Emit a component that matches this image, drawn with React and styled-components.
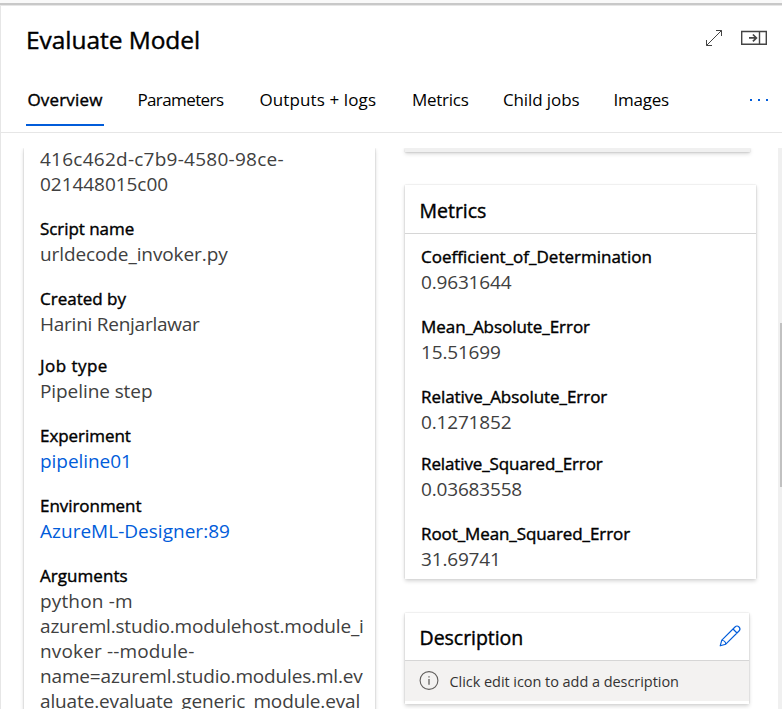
import React from "react";
import styled, { createGlobalStyle } from "styled-components";

const GlobalStyle = createGlobalStyle`
  * { box-sizing: border-box; }
  body {
    margin: 0;
    background: #fff;
    color: #000;
    font-family: "Open Sans", "Noto Sans", sans-serif;
    overflow: hidden;
  }
`;

const Page = styled.div`
  display: flex;
  flex-direction: column;
  width: 782px;
  height: 709px;
  overflow: hidden;
  background: #f9f9f9;
  padding-top: 3px;
`;

const Panel = styled.main`
  display: flex;
  flex-direction: column;
  flex: 1;
  min-height: 0;
  background: #fff;
  border-top: 2px solid #c8c8c8;
  box-shadow: inset 1px 1px 0 #e6e6e6;
`;

const Header = styled.header`
  display: flex;
  justify-content: space-between;
  height: 70px;
  padding: 18px 15px 0 26px;
`;

const Title = styled.h1`
  margin: 0;
  font-size: 24.5px;
  line-height: 34px;
  font-weight: 400;
  letter-spacing: -0.05px;
  -webkit-text-stroke: 0.4px #000;
`;

const HeaderActions = styled.div`
  display: flex;
  gap: 18px;
  height: 30px;
  align-items: center;
`;

const IconButton = styled.button`
  display: flex;
  padding: 0;
  border: 0;
  background: none;
  color: ${(p) => p.$color || "#444"};
`;

const EditButton = styled(IconButton)`
  margin-bottom: 4px;
`;

const TabBar = styled.nav`
  display: flex;
  height: 58px;
  margin-left: 1px;
  padding-left: 25px;
  border-bottom: 1px solid #e6e6e6;
`;

const Tab = styled.a`
  width: ${(p) => p.$width}px;
  height: 51px;
  margin-right: ${(p) => p.$gap}px;
  padding: 12px 0 0 1.4px;
  font-size: 17px;
  line-height: 26px;
  white-space: nowrap;
  letter-spacing: ${(p) => p.$track || 0}px;
  border-bottom: 2px solid ${(p) => (p.$active ? "#015cda" : "transparent")};
  -webkit-text-stroke: ${(p) => (p.$active ? "0.4px #000" : "0")};
`;

const MoreButton = styled(IconButton)`
  height: 49px;
  margin-left: auto;
  margin-right: 13px;
  align-items: center;
`;

const Body = styled.section`
  display: flex;
  flex: 1;
  min-height: 0;
  margin-top: 15px;
  padding-left: 24px;
  overflow: hidden;
`;

const cardShadow = "0 1.6px 4px rgba(0,0,0,.18), 0 0.3px 1.5px rgba(0,0,0,.24)";

const Details = styled.div`
  width: 351px;
  height: 640px;
  flex: none;
  padding: 0 10px 0 16px;
  box-shadow: ${cardShadow};
`;

const DetailsContent = styled.div`
  margin-top: -2px;
`;

const Side = styled.div`
  width: 352px;
  margin-left: 30px;
`;

const CardTail = styled.div`
  width: 345px;
  height: 4px;
  margin-bottom: 33px;
  background: #f0f0f0;
  box-shadow: ${cardShadow};
`;

const Card = styled.article`
  width: ${(p) => p.$width}px;
  height: ${(p) => p.$height}px;
  margin-bottom: 34px;
  background: #fff;
  box-shadow: ${cardShadow};
`;

const CardHeader = styled.div`
  display: flex;
  justify-content: space-between;
  align-items: center;
  height: ${(p) => p.$height}px;
  padding: 3px 8px 0 14.6px;
  border-bottom: 1px solid #d6d6d6;
`;

const CardTitle = styled.h2`
  margin: 0;
  font-size: 19.5px;
  line-height: 28px;
  font-weight: 400;
  letter-spacing: -0.05px;
  -webkit-text-stroke: 0.4px #000;
`;

const CardBody = styled.div`
  padding: 11px 15px 0 16px;
`;

const Field = styled.div`
  margin-bottom: ${(p) => p.$gap ?? 21}px;
`;

const Label = styled.div`
  font-size: 17px;
  line-height: 24px;
  white-space: nowrap;
  letter-spacing: ${(p) => (p.$track || 0) - 0.05}px;
  -webkit-text-stroke: 0.4px #000;
`;

const Value = styled.div`
  padding-top: 1px;
  font-size: 19px;
  line-height: 25px;
  height: 25px;
  white-space: nowrap;
  color: ${(p) => (p.$link ? "#015cda" : "#404040")};
  letter-spacing: ${(p) => (p.$track || 0) - 0.05}px;
`;

const Notice = styled.div`
  display: flex;
  align-items: center;
  gap: 10.5px;
  height: 40px;
  padding-left: 14px;
  background: #f3f2f1;
  color: #333;
  font-size: 14.5px;
  line-height: 20px;
  letter-spacing: -0.05px;
`;

const NoticeText = styled.span`
  padding-top: 2px;
`;

const Scrollbar = styled.div`
  width: 4px;
  margin-left: auto;
  padding: 175px 0 0 2px;
  background: #f0f0f0;
`;

const Thumb = styled.div`
  height: 164px;
  background: #c1c1c1;
`;

const ExpandIcon = () => (
  <svg width="18" height="18" viewBox="0 0 18 18" fill="none" stroke="currentColor" strokeWidth="1">
    <path d="M1.5 16.5 16.5 1.5M11 1.5h5.5V7M1.5 11v5.5H7" />
  </svg>
);

const CollapseIcon = () => (
  <svg width="26" height="16" viewBox="0 0 26 16" fill="none" stroke="currentColor">
    <path d="M.7 1.5h24.6v12.8H.7zM18.5 1.5v12.8" strokeWidth="1.4" />
    <path d="M8 7.9h7.5M11.9 4.5l3.5 3.4-3.5 3.4" strokeWidth="1.7" />
  </svg>
);

const MoreIcon = () => (
  <svg width="20" height="4" viewBox="0 0 20 4" fill="currentColor">
    <path d="M1 1h2v2H1zM9 1h2v2H9zM17 1h2v2h-2z" />
  </svg>
);

const PencilIcon = () => (
  <svg width="22" height="22" viewBox="0 0 22 22" fill="none" stroke="currentColor" strokeWidth="1.15" strokeLinejoin="round">
    <path d="M1.2 20.8 2.8 15.2 16 2a2.7 2.7 0 0 1 4 4L6.8 19.2zM2.8 15.2c2.1.1 3.9 1.9 4 4M14 4l4 4" />
  </svg>
);

const InfoIcon = () => (
  <svg width="20" height="20" viewBox="0 0 20 20" fill="none" stroke="#605e5c" strokeWidth="1.1">
    <circle cx="10" cy="9.5" r="8.9" />
    <path d="M10 8v5.7M10 5.2v1.3" strokeWidth="1.3" />
  </svg>
);

const tabs = [
  { text: "Overview", width: 78, gap: 32, track: 0.18, active: true },
  { text: "Parameters", width: 88, gap: 34, track: -0.6 },
  { text: "Outputs + logs", width: 118, gap: 34.5, track: 0.12 },
  { text: "Metrics", width: 58, gap: 33, track: -0.25 },
  { text: "Child jobs", width: 79, gap: 31.5, track: -0.1 },
  { text: "Images", width: 58, gap: 0, track: -0.2 },
];

const details = [
  { label: "Script name", lines: [["urldecode_invoker.py", -0.05]] },
  { label: "Created by", track: 0.05, lines: [["Harini Renjarlawar", -0.2]], gap: 18 },
  { label: "Job type", track: 0.5, lines: [["Pipeline step", -0.03]] },
  { label: "Experiment", lines: [["pipeline01", 0]], link: true },
  { label: "Environment", lines: [["AzureML-Designer:89", 0.07]], link: true },
  {
    label: "Arguments",
    track: 0.1,
    lines: [
      ["python -m", 0.2],
      ["azureml.studio.modulehost.module_i", -0.13],
      ["nvoker --module-", 0.2],
      ["name=azureml.studio.modules.ml.ev", -0.11],
      ["aluate.evaluate_generic_module.eval", -0.09],
    ],
  },
];

const metrics = [
  { label: "Coefficient_of_Determination", track: 0.05, lines: [["0.9631644", -0.12]] },
  { label: "Mean_Absolute_Error", lines: [["15.51699", -0.12]] },
  { label: "Relative_Absolute_Error", lines: [["0.1271852", -0.12]], gap: 18 },
  { label: "Relative_Squared_Error", track: -0.06, lines: [["0.03683558", -0.12]] },
  { label: "Root_Mean_Squared_Error", track: -0.04, lines: [["31.69741", -0.12]] },
];

const FieldList = ({ items }) =>
  items.map((item) => (
    <Field key={item.label} $gap={item.gap}>
      <Label $track={item.track}>{item.label}</Label>
      {item.lines.map(([text, track]) => (
        <Value key={text} $track={track} $link={item.link}>{text}</Value>
      ))}
    </Field>
  ));

export default function App() {
  return (
    <Page>
      <GlobalStyle />
      <Panel>
        <Header>
          <Title>Evaluate Model</Title>
          <HeaderActions>
            <IconButton aria-label="Expand"><ExpandIcon /></IconButton>
            <IconButton aria-label="Collapse panel"><CollapseIcon /></IconButton>
          </HeaderActions>
        </Header>
        <TabBar>
          {tabs.map((t) => (
            <Tab key={t.text} $width={t.width} $gap={t.gap} $track={t.track} $active={t.active}>{t.text}</Tab>
          ))}
          <MoreButton $color="#015cda" aria-label="More tabs"><MoreIcon /></MoreButton>
        </TabBar>
        <Body>
          <Details>
            <DetailsContent>
              <Field>
                <Value $track={0.3}>416c462d-c7b9-4580-98ce-</Value>
                <Value>021448015c00</Value>
              </Field>
              <FieldList items={details} />
            </DetailsContent>
          </Details>
          <Side>
            <CardTail />
            <Card $width={351} $height={394}>
              <CardHeader $height={49}><CardTitle>Metrics</CardTitle></CardHeader>
              <CardBody><FieldList items={metrics} /></CardBody>
            </Card>
            <Card $width={344} $height={91}>
              <CardHeader $height={48}>
                <CardTitle>Description</CardTitle>
                <EditButton $color="#015cda" aria-label="Edit description"><PencilIcon /></EditButton>
              </CardHeader>
              <Notice><InfoIcon /><NoticeText>Click edit icon to add a description</NoticeText></Notice>
            </Card>
          </Side>
          <Scrollbar><Thumb /></Scrollbar>
        </Body>
      </Panel>
    </Page>
  );
}
